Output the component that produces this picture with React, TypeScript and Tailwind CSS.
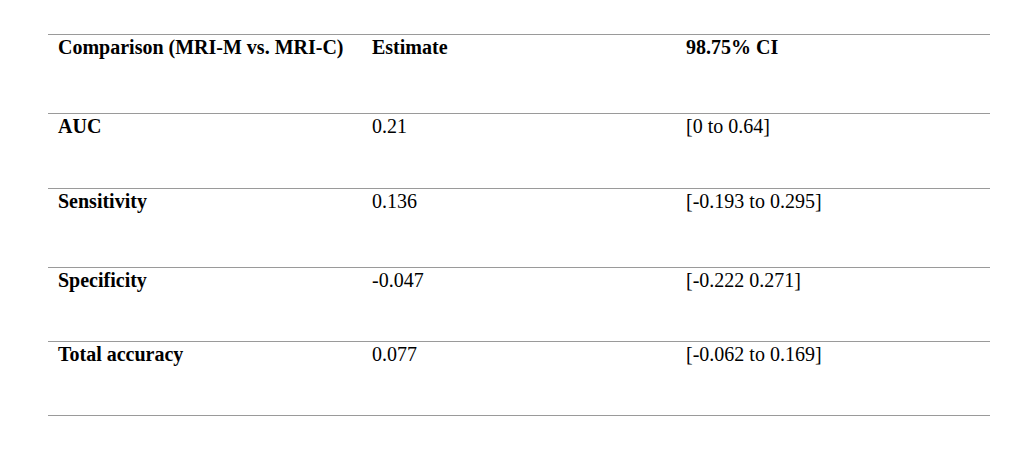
export default function App() {
  const rows = [
    { label: "AUC", estimate: "0.21", ci: "[0 to 0.64]", h: "h-[75px]" },
    { label: "Sensitivity", estimate: "0.136", ci: "[-0.193 to 0.295]", h: "h-[79px]" },
    { label: "Specificity", estimate: "-0.047", ci: "[-0.222 0.271]", h: "h-[74px]" },
    { label: "Total accuracy", estimate: "0.077", ci: "[-0.062 to 0.169]", h: "h-[74px]" },
  ];

  return (
    <div className="min-h-screen w-[1034px] bg-white pt-[34px] pl-[48px] font-['Liberation_Serif',serif] text-black">
      <div className="w-[942px] border-t border-[#9a9a9a]">
        <div className="grid h-[79px] grid-cols-3 border-b border-[#9a9a9a] pt-[1px] text-[20px] leading-[23px] font-bold">
          <div className="pl-[10px]">Comparison (MRI-M vs. MRI-C)</div>
          <div className="pl-[10px]">Estimate</div>
          <div className="pl-[10px]">98.75% CI</div>
        </div>
        {rows.map((row) => (
          <div
            key={row.label}
            className={`grid grid-cols-3 border-b border-[#9a9a9a] pt-[1px] text-[20px] leading-[23px] ${row.h}`}
          >
            <div className="pl-[10px] font-bold">{row.label}</div>
            <div className="pl-[10px]">{row.estimate}</div>
            <div className="pl-[10px]">{row.ci}</div>
          </div>
        ))}
      </div>
    </div>
  );
}
